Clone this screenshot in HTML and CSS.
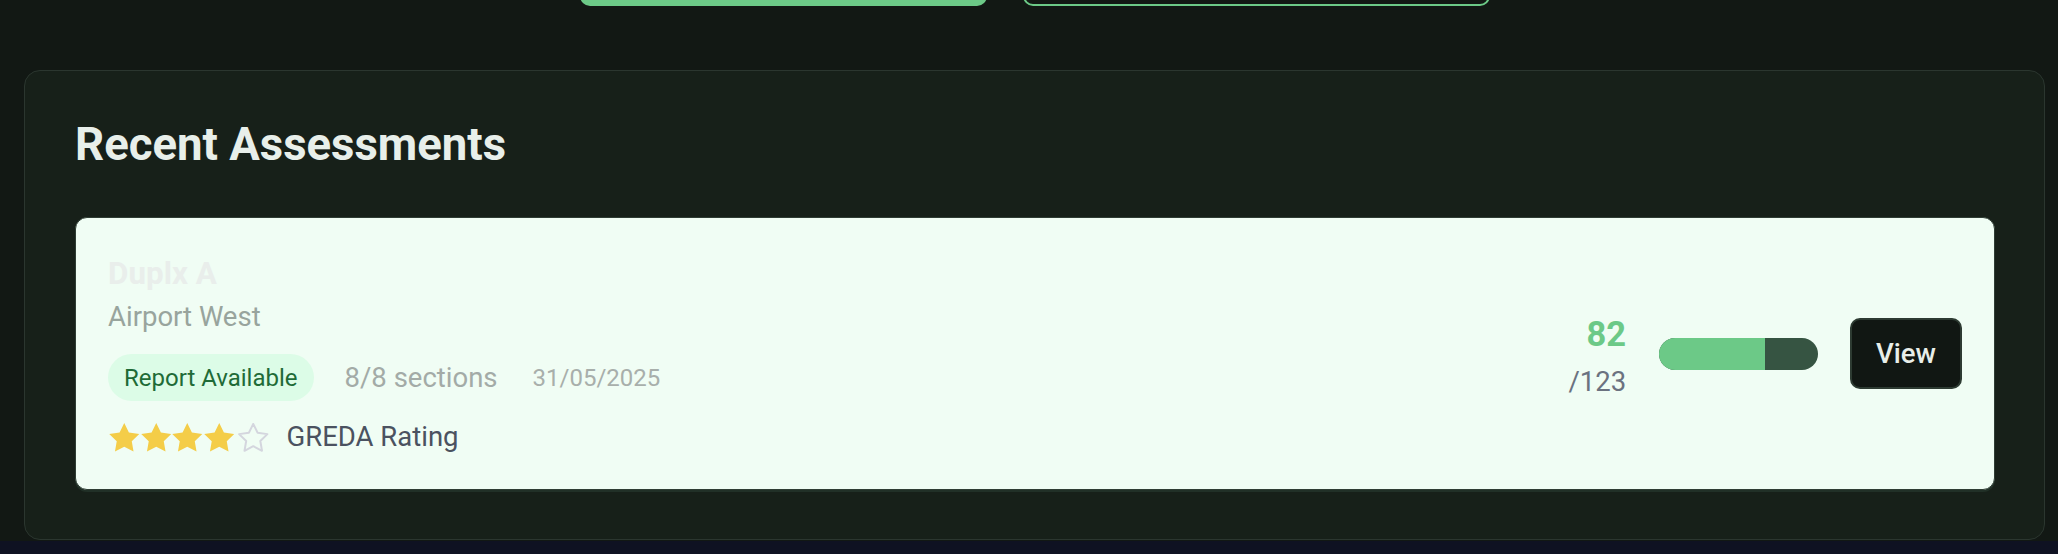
FILE: index.html
```html
<!DOCTYPE html>
<html lang="en">
<head>
<meta charset="utf-8">
<title>Recent Assessments</title>
<link rel="stylesheet" href="styles.css">
</head>
<body>
<div class="app">
  <div class="topbar">
    <button class="btn-primary" type="button"></button>
    <button class="btn-outline" type="button"></button>
  </div>
  <section class="panel">
    <h2 class="panel-title">Recent Assessments</h2>
    <div class="assessment">
      <div class="info">
        <div class="name">Duplx A</div>
        <div class="location">Airport West</div>
        <div class="meta">
          <span class="pill">Report Available</span>
          <span class="sections">8/8 sections</span>
          <span class="date">31/05/2025</span>
        </div>
        <div class="rating">
          <span class="stars">
            <svg class="star" viewBox="2 2 20 19.3"><path d="M12 2l3.09 6.26L22 9.27l-5 4.87 1.18 6.88L12 17.77l-6.18 3.25L7 14.14 2 9.27l6.91-1.01L12 2z"/></svg>
            <svg class="star" viewBox="2 2 20 19.3"><path d="M12 2l3.09 6.26L22 9.27l-5 4.87 1.18 6.88L12 17.77l-6.18 3.25L7 14.14 2 9.27l6.91-1.01L12 2z"/></svg>
            <svg class="star" viewBox="2 2 20 19.3"><path d="M12 2l3.09 6.26L22 9.27l-5 4.87 1.18 6.88L12 17.77l-6.18 3.25L7 14.14 2 9.27l6.91-1.01L12 2z"/></svg>
            <svg class="star" viewBox="2 2 20 19.3"><path d="M12 2l3.09 6.26L22 9.27l-5 4.87 1.18 6.88L12 17.77l-6.18 3.25L7 14.14 2 9.27l6.91-1.01L12 2z"/></svg>
            <svg class="star star-empty" viewBox="1.4 1.4 21.2 20.5"><path d="M12 2l3.09 6.26L22 9.27l-5 4.87 1.18 6.88L12 17.77l-6.18 3.25L7 14.14 2 9.27l6.91-1.01L12 2z"/></svg>
          </span>
          <span class="rating-label">GREDA Rating</span>
        </div>
      </div>
      <div class="score">
        <div class="score-value">82</div>
        <div class="score-max">/123</div>
      </div>
      <div class="bar"><div class="bar-fill" style="width: 66.67%"></div></div>
      <button class="view-btn" type="button">View</button>
    </div>
  </section>
</div>
</body>
</html>
```

FILE: styles.css
```css
* { box-sizing: border-box; }

html, body {
  margin: 0;
  padding: 0;
}

body {
  background: #0f1222;
  font-family: Roboto, "Liberation Sans", Arial, sans-serif;
}

.app {
  background: #121814;
  padding-bottom: 1px;
}

.topbar {
  height: 6px;
  overflow: hidden;
  display: flex;
  align-items: flex-end;
  gap: 36px;
  padding-left: 580px;
}

.btn-primary {
  flex: none;
  width: 407px;
  height: 40px;
  border: none;
  border-radius: 10px;
  background: #6cc987;
  padding: 0;
}

.btn-outline {
  flex: none;
  width: 467px;
  height: 40px;
  border: 2px solid #6cc987;
  border-radius: 10px;
  background: transparent;
  padding: 0;
}

.panel {
  margin: 64px 13px 0 24px;
  background: #172019;
  border: 1px solid #2b362f;
  border-radius: 16px;
  padding: 46px 49px 49px 50px;
}

.panel-title {
  margin: 0 0 45px;
  font-size: 45.5px;
  line-height: 55px;
  font-weight: 700;
  color: #e8efea;
}

.assessment {
  display: flex;
  align-items: center;
  background: #f0fdf4;
  border: 1px solid #2f3d34;
  border-radius: 12px;
  padding: 36px 32px 36px 32px;
  box-shadow: 0 2px 0 rgba(40, 60, 48, 0.6);
}

.info {
  flex: 1;
  display: flex;
  flex-direction: column;
  align-items: flex-start;
}

.name {
  font-size: 31.4px;
  line-height: 40px;
  font-weight: 700;
  color: #e9eeeb;
}

.location {
  font-size: 27.5px;
  line-height: 46px;
  color: #98a49d;
}

.meta {
  margin-top: 14px;
  display: flex;
  align-items: center;
}

.pill {
  height: 47px;
  display: flex;
  align-items: center;
  padding: 0 16px;
  border-radius: 999px;
  background: #dcfce7;
  color: #1f6b37;
  font-size: 24px;
}

.sections {
  margin-left: 31px;
  font-size: 27.5px;
  color: #a3aba7;
}

.date {
  margin-left: 35px;
  font-size: 24px;
  color: #a8afab;
}

.rating {
  margin-top: 20px;
  height: 32px;
  display: flex;
  align-items: center;
}

.stars {
  display: flex;
  align-items: center;
  gap: 1px;
  margin-left: 1px;
}

.star {
  width: 30.5px;
  height: 29px;
  fill: #f4cd48;
}

.star-empty {
  margin-left: 3px;
  fill: none;
  stroke: #d4d6de;
  stroke-width: 1.4;
  stroke-linejoin: round;
}

.rating-label {
  margin-left: 18px;
  font-size: 27.5px;
  line-height: 32px;
  color: #4b5260;
}

.score {
  text-align: right;
}

.score-value {
  font-size: 34.5px;
  line-height: 56px;
  font-weight: 700;
  color: #6cc987;
}

.score-max {
  font-size: 27.5px;
  line-height: 39px;
  color: #6b7280;
}

.bar {
  margin-left: 33px;
  width: 159px;
  height: 32px;
  border-radius: 999px;
  background: #365442;
  overflow: hidden;
}

.bar-fill {
  height: 100%;
  background: #6cc987;
}

.view-btn {
  margin-left: 32px;
  height: 71px;
  padding: 0 24px;
  border: 2px solid #2d3b32;
  border-radius: 10px;
  background: #111713;
  color: #e8eee9;
  font-family: Roboto, "Liberation Sans", Arial, sans-serif;
  font-size: 27.5px;
  font-weight: 500;
}
```
